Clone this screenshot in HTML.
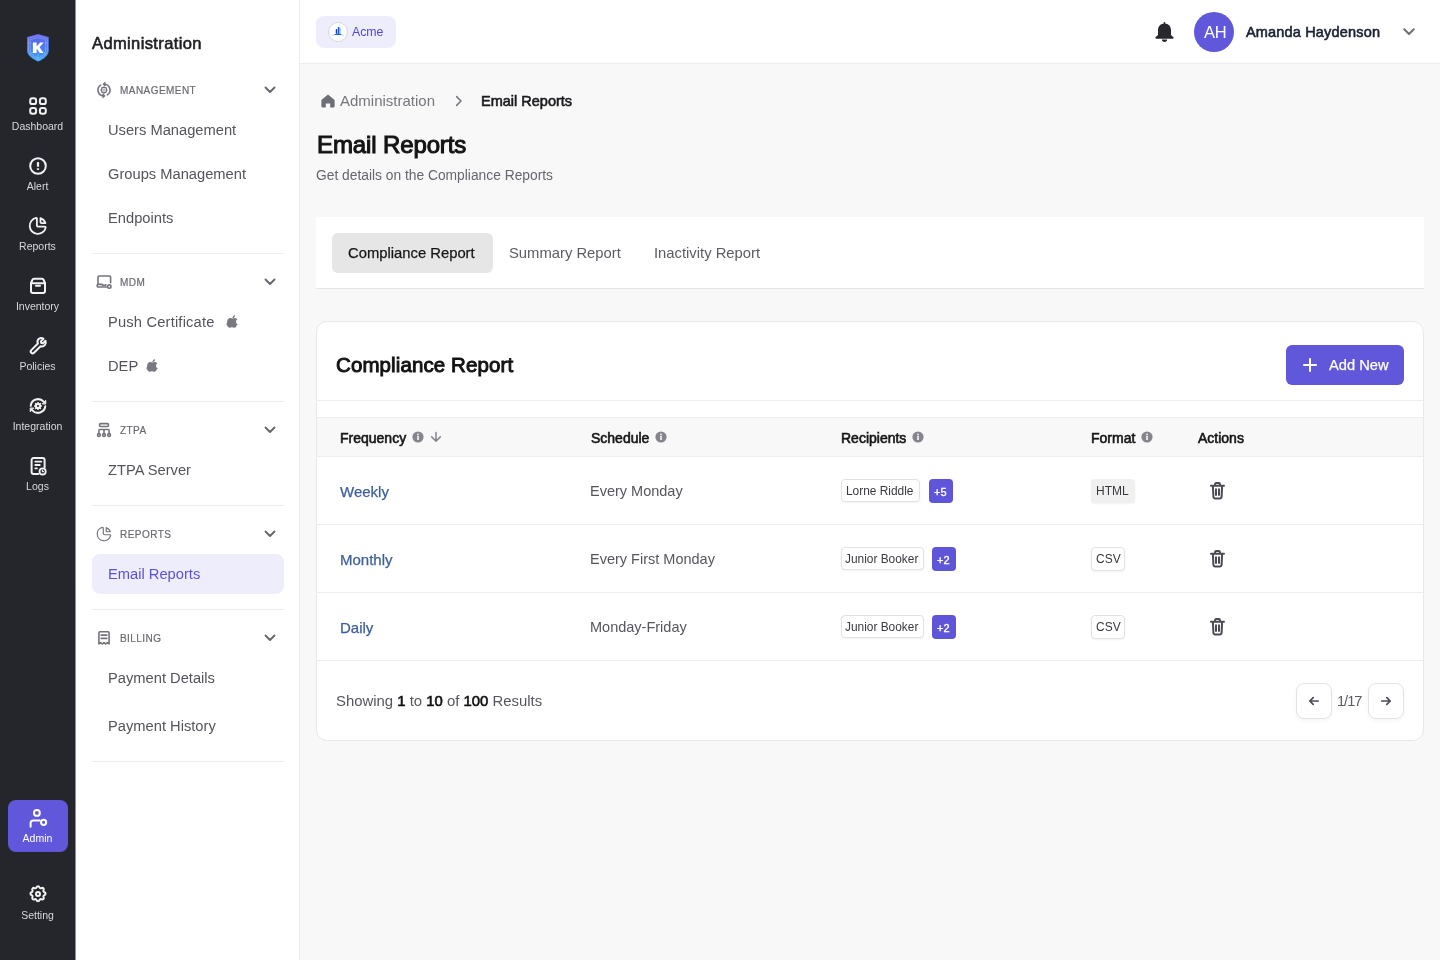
<!DOCTYPE html>
<html lang="en">
<head>
<meta charset="utf-8">
<title>Email Reports</title>
<style>
*{box-sizing:border-box;margin:0;padding:0}
html,body{width:1440px;height:960px;overflow:hidden;background:#f8f8f8;font-family:"Liberation Sans",sans-serif;position:relative}
.a{position:absolute}
.t{will-change:transform;position:absolute;white-space:nowrap;font-size:var(--f);line-height:var(--f);top:calc(var(--b) - 0.8465*var(--f))}
.b{font-weight:700}
.sb{-webkit-text-stroke-width:0.6px}
.md{-webkit-text-stroke-width:0.25px}
svg{position:absolute;overflow:visible}
/* nav */
#nav{left:0;top:0;width:75px;height:960px;background:#25262b}
#navb{left:75px;top:0;width:1px;height:960px;background:#8c8f9a}
.nl{color:#d8d8dc;text-align:center;width:75px;left:0}
.ni{stroke:#f2f2f2;fill:none;stroke-width:2;stroke-linecap:round;stroke-linejoin:round}
/* side */
#side{left:76px;top:0;width:223px;height:960px;background:#fff}
#sideb{left:299px;top:0;width:1px;height:960px;background:#ececec}
.sh{color:#6a6a72;letter-spacing:0.45px;-webkit-text-stroke:0.2px #6a6a72}
.si{color:#54545c}
.dv{left:92px;width:192px;height:1px;background:#ececec}
.sic{stroke:#74747c;fill:none;stroke-width:1.6;stroke-linecap:round;stroke-linejoin:round}
.chev{stroke:#64646c;fill:none;stroke-width:1.8;stroke-linecap:round;stroke-linejoin:round}
/* header */
#hdr{left:300px;top:0;width:1140px;height:63px;background:#fff}
#hdrb{left:300px;top:63px;width:1140px;height:1px;background:#ececec}
/* main */
.th{color:#161618}
.info{fill:#85858d}
.row{left:317px;width:1106px;height:1px;background:#eeeeee}
.tag{position:absolute;height:23px;border:1px solid #e2e2e2;border-radius:4px;background:#fff;box-shadow:0 1px 2px rgba(0,0,0,.05)}
.badge{position:absolute;width:24px;height:24px;border-radius:4px;background:#5f55d8}
.trash{stroke:#4b4b55;fill:none;stroke-width:2;stroke-linecap:round;stroke-linejoin:round}
</style>
</head>
<body>
<!-- ============ DARK NAV ============ -->
<div id="nav" class="a"></div>
<div id="navb" class="a"></div>
<!-- logo -->
<svg style="left:26px;top:33px" width="24" height="30" viewBox="0 0 24 30">
  <defs>
    <linearGradient id="lg" x1="0" y1="0" x2="0" y2="1">
      <stop offset="0" stop-color="#6360e6"/>
      <stop offset=".55" stop-color="#4a7ff0"/>
      <stop offset="1" stop-color="#3daaf6"/>
    </linearGradient>
  </defs>
  <path d="M12.1 1.1L22.8 4.1V17.5C22.8 22.5 17.5 26.3 12.2 28.6 6.9 26.3 1 22.5 1 17.5V4.1z" fill="url(#lg)"/>
  <g stroke="#cfe6ff" stroke-width=".7" fill="none" opacity=".45">
    <path d="M12.1 2.6L21.3 5.2V17.3C21.3 21.6 16.8 24.9 12.2 27 7.6 24.9 2.5 21.6 2.5 17.3V5.2z"/>
    <path d="M12.1 4.6L19.6 6.6V17C19.6 20.6 16 23.4 12.2 25.2 8.4 23.4 4.2 20.6 4.2 17V6.6z"/>
    <path d="M3 22l6-4M21 22l-6-4M2.5 10h3M18.5 10h3M12 21v5"/>
  </g>
  <path d="M6.9 9.4h3.7v4.2l3.6-4.2h3.4l-4 4.9 3.8 5.6h-3.6l-3.2-4.5v4.5H6.9z" fill="#fff"/>
</svg>

<!-- Dashboard -->
<svg class="ni" style="left:26px;top:94px" width="24" height="24" viewBox="0 0 24 24">
  <rect x="4.2" y="4.2" width="5.9" height="5.9" rx="2.2"/><rect x="13.9" y="4.2" width="5.9" height="5.9" rx="2.2"/>
  <rect x="4.2" y="13.9" width="5.9" height="5.9" rx="2.2"/><rect x="13.9" y="13.9" width="5.9" height="5.9" rx="2.2"/>
</svg>
<div class="t nl" style="--b:130px;--f:10.5px">Dashboard</div>
<!-- Alert -->
<svg class="ni" style="left:26px;top:154px" width="24" height="24" viewBox="0 0 24 24">
  <circle cx="12" cy="12" r="7.8"/><path d="M12 8.1v4.6" stroke-linecap="butt" stroke-width="2.2"/><path d="M12 14.3v1.6" stroke-linecap="butt" stroke-width="2.2"/>
</svg>
<div class="t nl" style="--b:190.3px;--f:10.5px">Alert</div>
<!-- Reports -->
<svg class="ni" style="left:27.4px;top:215px" width="21.6" height="21.6" viewBox="0 0 24 24" stroke-width="2.2">
  <path d="M10 3.2a9 9 0 1 0 10.8 10.8a1 1 0 0 0 -1 -1h-6.8a2 2 0 0 1 -2 -2v-7a.9 .9 0 0 0 -1 -.8"/><path d="M15 3.5a9 9 0 0 1 5.5 5.5h-4.5a1 1 0 0 1 -1 -1v-4.5"/>
</svg>
<div class="t nl" style="--b:250.3px;--f:10.5px">Reports</div>
<!-- Inventory -->
<svg class="ni" style="left:26px;top:274px" width="24" height="24" viewBox="0 0 24 24">
  <path d="M5 9V17.1a2 2 0 0 0 2 2h10a2 2 0 0 0 2 -2V9"/><path d="M5 9.2l1.3-3.2a2 2 0 0 1 1.8-1.3h7.8a2 2 0 0 1 1.8 1.3l1.3 3.2z"/><path d="M10 11.8h4"/>
</svg>
<div class="t nl" style="--b:310.3px;--f:10.5px">Inventory</div>
<!-- Policies -->
<svg class="ni" style="left:26px;top:334px" width="24" height="24" viewBox="0 0 24 24">
  <path transform="translate(-1.3 -0.4)" d="M14.2 5.2a4 4 0 0 1 4.6 0l-2.6 2.6 0.4 1.6 1.6 0.4 2.6-2.6a4 4 0 0 1 -4.9 5.4l-6.6 6.6a1.9 1.9 0 0 1 -2.7 -2.7l6.6-6.6a4 4 0 0 1 1 -4.7z"/>
</svg>
<div class="t nl" style="--b:370.3px;--f:10.5px">Policies</div>
<!-- Integration -->
<svg class="ni" style="left:26px;top:394px" width="24" height="24" viewBox="0 0 24 24">
  <path d="M4.7 11.8a7.4 7.4 0 0 1 12.9-4.1"/><path d="M19.3 12.2a7.4 7.4 0 0 1 -12.9 4.1"/>
  <path d="M16.4 9.7L19.8 6.3V9.7z" fill="#f2f2f2" stroke-width="0.9"/><path d="M7.6 14.3L4.2 17.7V14.3z" fill="#f2f2f2" stroke-width="0.9"/>
  <g fill="#f2f2f2" stroke="none">
    <circle cx="12" cy="12" r="3.1"/>
    <rect x="11.25" y="8" width="1.5" height="8" rx=".3"/><rect x="8" y="11.25" width="8" height="1.5" rx=".3"/>
    <rect x="11.25" y="8" width="1.5" height="8" rx=".3" transform="rotate(45 12 12)"/><rect x="11.25" y="8" width="1.5" height="8" rx=".3" transform="rotate(-45 12 12)"/>
  </g>
  <circle cx="12" cy="12" r="1.1" fill="#25262b" stroke="none"/>
</svg>
<div class="t nl" style="--b:430.3px;--f:10.5px">Integration</div>
<!-- Logs -->
<svg class="ni" style="left:26px;top:454px" width="24" height="24" viewBox="0 0 24 24">
  <path d="M12.2 20H7.6a2 2 0 0 1 -2 -2V6a2 2 0 0 1 2 -2h9a2 2 0 0 1 2 2v7.4"/>
  <path d="M9.3 7.7h6M9.3 11h4.5M9.3 14.4h1.6" stroke-width="1.8"/>
  <circle cx="16.6" cy="17.4" r="3.1" stroke-width="1.8"/><path d="M16.4 16v1.6h1.1" stroke-width="1.1"/>
</svg>
<div class="t nl" style="--b:490.3px;--f:10.5px">Logs</div>

<!-- Admin -->
<div class="a" style="left:8px;top:800px;width:60px;height:52px;background:#6157db;border-radius:8px"></div>
<svg class="ni" style="left:25.7px;top:805.6px;stroke:#fff" width="24" height="24" viewBox="0 0 24 24">
  <circle cx="10.9" cy="6.9" r="2.9"/><path d="M4.6 20.8v-3.6a2.6 2.6 0 0 1 2.6-2.6h6.4"/><circle cx="17.6" cy="16.3" r="2.6"/>
</svg>
<div class="t nl" style="--b:842px;--f:10.5px;color:#fff">Admin</div>
<!-- Setting -->
<svg class="ni" style="left:26px;top:882px" width="24" height="24" viewBox="0 0 24 24">
  <path d="M10.6 5.2c.4-1.4 2.4-1.4 2.8 0a1.5 1.5 0 0 0 2.2 .9c1.3-.8 2.7 .7 2 2a1.5 1.5 0 0 0 .9 2.2c1.4 .4 1.4 2.4 0 2.8a1.5 1.5 0 0 0 -.9 2.2c.8 1.3-.7 2.7-2 2a1.5 1.5 0 0 0 -2.2 .9c-.4 1.4-2.4 1.4-2.8 0a1.5 1.5 0 0 0 -2.2-.9c-1.3 .8-2.7-.7-2-2a1.5 1.5 0 0 0 -.9-2.2c-1.4-.4-1.4-2.4 0-2.8a1.5 1.5 0 0 0 .9-2.2c-.8-1.3 .7-2.7 2-2a1.5 1.5 0 0 0 2.2-.9z"/>
  <circle cx="12" cy="12" r="2"/>
</svg>
<div class="t nl" style="--b:918.4px;--f:10.5px">Setting</div>

<!-- ============ SECONDARY SIDEBAR ============ -->
<div id="side" class="a"></div>
<div id="sideb" class="a"></div>
<div class="t sb" style="left:92px;--b:49.2px;--f:16.5px;letter-spacing:0.38px;color:#1e1e23">Administration</div>

<!-- Management -->
<svg class="sic" style="left:94px;top:80px" width="20" height="20" viewBox="0 0 20 20" stroke-width="1.5">
  <path d="M6.7 5.1A5.8 5.8 0 0 0 9.4 15.8"/><path d="M10.6 4.2A5.8 5.8 0 0 1 13.3 14.9"/>
  <path d="M9.2 14.2L11.1 15.8 9.2 17.5z" fill="#74747c" stroke-width="1"/><path d="M10.8 2.5L8.9 4.2 10.8 5.8z" fill="#74747c" stroke-width="1"/>
  <rect x="7.7" y="7.7" width="4.6" height="4.6" rx=".5" stroke-width="1.3"/><rect x="9.3" y="9.3" width="1.4" height="1.4" fill="#74747c" stroke="none"/>
  <path d="M10 6.6v.9M10 12.5v.9M6.6 10h.9M12.5 10h.9" stroke-width="1.1"/>
</svg>
<div class="t sh" style="left:120.3px;--b:94.5px;--f:10px">MANAGEMENT</div>
<svg class="chev" style="left:262px;top:84px" width="16" height="12" viewBox="0 0 16 12"><path d="M3.5 3.5l4.5 4.5 4.5-4.5"/></svg>
<div class="t si" style="left:108px;--b:135.2px;--f:14.7px">Users Management</div>
<div class="t si" style="left:108px;--b:179.3px;--f:14.7px">Groups Management</div>
<div class="t si" style="left:108px;--b:223.3px;--f:14.7px">Endpoints</div>
<div class="a dv" style="top:253px"></div>

<!-- MDM -->
<svg class="sic" style="left:94px;top:272px" width="20" height="20" viewBox="0 0 20 20" stroke-width="1.5">
  <path d="M4 12V5.2A1.2 1.2 0 0 1 5.2 4h10.2A1.2 1.2 0 0 1 16.6 5.2V10.7"/>
  <path d="M12.8 15H4.2A1 1 0 0 1 3.2 14V13.2A.8 .8 0 0 1 4 12.4H8.1l.7 .8h2.6l.5-.5"/>
  <circle cx="15.3" cy="14.6" r="1.7"/>
</svg>
<div class="t sh" style="left:120.3px;--b:286.8px;--f:10px">MDM</div>
<svg class="chev" style="left:262px;top:276px" width="16" height="12" viewBox="0 0 16 12"><path d="M3.5 3.5l4.5 4.5 4.5-4.5"/></svg>
<div class="t si" style="left:108px;--b:327.5px;--f:14.7px;letter-spacing:.18px">Push Certificate</div>
<svg style="left:227.2px;top:314.9px" width="12" height="13" viewBox="0 0 170 200"><path fill="#7a7981" d="M150 147c-3 8-7 15-11 22-6 9-11 15-15 18-6 6-13 8-20 8-5 0-11-1-18-4-7-3-13-4-19-4-6 0-13 1-19 4-7 3-12 4-16 4-8 0-15-3-21-9-4-4-9-10-15-19-6-9-11-20-15-31C-3 124-5 113-5 102c0-12 3-23 8-32 4-7 10-13 17-17 7-4 15-6 23-6 5 0 11 1 19 4 8 3 13 4 15 4 2 0 8-2 17-5 9-3 16-4 22-4 17 1 29 8 38 20-15 9-23 22-22 39 0 13 5 24 14 33 4 4 9 7 14 9-1 3-2 6-4 9zM116 7c0 10-4 20-11 29-9 10-19 16-30 15 0-1 0-3 0-4 0-10 4-20 12-29 4-4 8-8 14-11 6-3 11-4 16-4 0 1 0 3 0 4z"/></svg>
<div class="t si" style="left:108px;--b:371.2px;--f:14.7px">DEP</div>
<svg style="left:146.5px;top:358.9px" width="12" height="13" viewBox="0 0 170 200"><path fill="#7a7981" d="M150 147c-3 8-7 15-11 22-6 9-11 15-15 18-6 6-13 8-20 8-5 0-11-1-18-4-7-3-13-4-19-4-6 0-13 1-19 4-7 3-12 4-16 4-8 0-15-3-21-9-4-4-9-10-15-19-6-9-11-20-15-31C-3 124-5 113-5 102c0-12 3-23 8-32 4-7 10-13 17-17 7-4 15-6 23-6 5 0 11 1 19 4 8 3 13 4 15 4 2 0 8-2 17-5 9-3 16-4 22-4 17 1 29 8 38 20-15 9-23 22-22 39 0 13 5 24 14 33 4 4 9 7 14 9-1 3-2 6-4 9zM116 7c0 10-4 20-11 29-9 10-19 16-30 15 0-1 0-3 0-4 0-10 4-20 12-29 4-4 8-8 14-11 6-3 11-4 16-4 0 1 0 3 0 4z"/></svg>
<div class="a dv" style="top:401px"></div>

<!-- ZTPA -->
<svg class="sic" style="left:94px;top:420px" width="20" height="20" viewBox="0 0 20 20" stroke-width="1.5">
  <rect x="5.5" y="3.6" width="9" height="2.9" rx="1.2"/>
  <path d="M4.9 13.3V10.6A1.1 1.1 0 0 1 6 9.5h8A1.1 1.1 0 0 1 15.1 10.6V13.3M10 9.5v3.8"/>
  <circle cx="4.9" cy="15" r="1.4"/><circle cx="10" cy="15" r="1.4"/><circle cx="15.1" cy="15" r="1.4"/>
</svg>
<div class="t sh" style="left:120.3px;--b:434.6px;--f:10px">ZTPA</div>
<svg class="chev" style="left:262px;top:424px" width="16" height="12" viewBox="0 0 16 12"><path d="M3.5 3.5l4.5 4.5 4.5-4.5"/></svg>
<div class="t si" style="left:108px;--b:475.4px;--f:14.7px">ZTPA Server</div>
<div class="a dv" style="top:505px"></div>

<!-- Reports -->
<svg class="sic" style="left:95px;top:525px" width="18" height="18" viewBox="0 0 24 24" stroke-width="2.2">
  <path d="M10 3.2a9 9 0 1 0 10.8 10.8a1 1 0 0 0 -1 -1h-6.8a2 2 0 0 1 -2 -2v-7a.9 .9 0 0 0 -1 -.8"/><path d="M15 3.5a9 9 0 0 1 5.5 5.5h-4.5a1 1 0 0 1 -1 -1v-4.5"/>
</svg>
<div class="t sh" style="left:120.3px;--b:538.8px;--f:10px">REPORTS</div>
<svg class="chev" style="left:262px;top:528px" width="16" height="12" viewBox="0 0 16 12"><path d="M3.5 3.5l4.5 4.5 4.5-4.5"/></svg>
<div class="a" style="left:92px;top:554px;width:192px;height:40px;border-radius:8px;background:#eeedfb"></div>
<div class="t" style="left:108px;--b:579.5px;--f:14.7px;color:#5b52d6">Email Reports</div>
<div class="a dv" style="top:609px"></div>

<!-- Billing -->
<svg class="sic" style="left:94px;top:628px" width="20" height="20" viewBox="0 0 20 20" stroke-width="1.5">
  <path d="M4.9 15.9V4.9L5.6 3.8H14.4L15.1 4.9V15.9L13.3 14.6 11.6 15.9 10 14.6 8.4 15.9 6.7 14.6z"/>
  <path d="M7.2 7.1h5.6M7.2 10.4h5.6"/>
</svg>
<div class="t sh" style="left:120.3px;--b:642.6px;--f:10px">BILLING</div>
<svg class="chev" style="left:262px;top:632px" width="16" height="12" viewBox="0 0 16 12"><path d="M3.5 3.5l4.5 4.5 4.5-4.5"/></svg>
<div class="t si" style="left:108px;--b:683.8px;--f:14.7px">Payment Details</div>
<div class="t si" style="left:108px;--b:731.3px;--f:14.7px">Payment History</div>
<div class="a dv" style="top:761px"></div>

<!-- ============ HEADER ============ -->
<div id="hdr" class="a"></div>
<div id="hdrb" class="a"></div>
<div class="a" style="left:316px;top:16px;width:80px;height:32px;border-radius:8px;background:#eeedfc"></div>
<div class="a" style="left:328px;top:22px;width:20px;height:20px;border-radius:50%;background:#fff;border:1px solid #d6d6dc"></div>
<svg style="left:332px;top:26px" width="12" height="12" viewBox="0 0 12 12">
  <rect x="3.1" y="4.1" width=".9" height="2.8" fill="#bfe0f8"/>
  <rect x="7.2" y="2" width="1.7" height="5.8" fill="#9fd0f5"/>
  <rect x="5.8" y=".9" width="1.5" height="7.4" rx=".4" fill="#1a56c9"/>
  <rect x="3.9" y="2.9" width="1.3" height="4.9" rx=".6" fill="#1d34ad"/>
  <ellipse cx="5.9" cy="8.4" rx="3.9" ry=".6" fill="#1a66d0"/>
  <path d="M0 9.5q1-.3 2-.7M9.8 8.9q1 .4 2.1.6" stroke="#8cc4f0" stroke-width=".7" fill="none"/>
</svg>
<div class="t" style="left:352px;--b:36px;--f:12.3px;color:#4f46dc">Acme</div>

<svg style="left:1155px;top:21px" width="19" height="22" viewBox="0 0 19 22">
  <rect x="8.6" y="1" width="1.8" height="2.4" rx=".9" fill="#27272d"/>
  <path fill="#27272d" d="M9.5 2.4C13.3 2.4 16 5.2 16 9V14.1L17.9 15.8A1 1 0 0 1 17.3 17.8H1.7A1 1 0 0 1 1.1 15.8L3 14.1V9C3 5.2 5.7 2.4 9.5 2.4z"/>
  <path fill="#27272d" d="M6.9 18.5h5.2a2.6 2.4 0 0 1 -5.2 0z"/>
</svg>
<div class="a" style="left:1194px;top:12px;width:40px;height:40px;border-radius:50%;background:#6157db"></div>
<div class="t" style="left:1203.5px;--b:38.1px;--f:16.5px;color:#fff;letter-spacing:-0.3px">AH</div>
<div class="t sb" style="left:1246px;--b:37px;--f:14.5px;letter-spacing:0.17px;color:#1b2233">Amanda Haydenson</div>
<svg class="chev" style="left:1401px;top:26px" width="16" height="12" viewBox="0 0 16 12"><path d="M3.2 3.2l4.8 4.8 4.8-4.8" stroke="#6e6e76" stroke-width="2"/></svg>

<!-- ============ MAIN ============ -->
<svg style="left:320px;top:94px" width="16" height="14" viewBox="0 0 16 14">
  <path fill="#6e6e76" d="M8 .6l6.6 5.4v6.6a1 1 0 0 1 -1 1H10.2V9.6H5.8v4H2.4a1 1 0 0 1 -1 -1V6z"/>
</svg>
<div class="t" style="left:340px;--b:105.8px;--f:15px;color:#76767e">Administration</div>
<svg class="chev" style="left:452px;top:93px" width="14" height="16" viewBox="0 0 14 16"><path d="M4.6 3.6l4.4 4.4-4.4 4.4" stroke="#76767e" stroke-width="1.5"/></svg>
<div class="t sb" style="left:481px;--b:106px;--f:14.5px;color:#1b1b1f">Email Reports</div>

<div class="t sb" style="left:316.5px;--b:153px;--f:24px;letter-spacing:-0.12px;color:#141416;-webkit-text-stroke-width:1.05px">Email Reports</div>
<div class="t" style="left:316px;--b:180.7px;--f:13.8px;color:#66666e">Get details on the Compliance Reports</div>

<!-- tabs -->
<div class="a" style="left:316px;top:217px;width:1108px;height:72px;background:#fff;border-bottom:1px solid #e4e4e4"></div>
<div class="a" style="left:332px;top:233px;width:161px;height:40px;border-radius:6px;background:#e6e6e6"></div>
<div class="t md" style="left:348px;--b:258.2px;--f:14.8px;color:#151517">Compliance Report</div>
<div class="t" style="left:509px;--b:258.2px;--f:14.8px;color:#5c5c64">Summary Report</div>
<div class="t" style="left:653.5px;--b:258.2px;--f:14.8px;color:#5c5c64">Inactivity Report</div>

<!-- card -->
<div class="a" style="left:316px;top:321px;width:1108px;height:420px;background:#fff;border:1px solid #e9e9e9;border-radius:11px"></div>
<div class="t sb" style="left:336px;--b:372px;--f:20.5px;letter-spacing:0.1px;color:#121214;-webkit-text-stroke-width:0.95px">Compliance Report</div>
<div class="a" style="left:1286px;top:345px;width:118px;height:40px;border-radius:6px;background:#6157db"></div>
<svg style="left:1302px;top:357px" width="16" height="16" viewBox="0 0 16 16"><path d="M8 1.2v13.6M1.2 8h13.6" stroke="#fff" stroke-width="2" stroke-linecap="butt"/></svg>
<div class="t md" style="left:1328.5px;--b:370.2px;--f:14.7px;color:#fff">Add New</div>
<div class="a row" style="top:400px"></div>

<!-- table header -->
<div class="a" style="left:317px;top:417px;width:1106px;height:40px;background:#f8f8f8;border-top:1px solid #eeeeee;border-bottom:1px solid #eeeeee"></div>
<div class="t sb th" style="left:340px;--b:442.4px;--f:14px">Frequency</div>
<svg class="info" style="left:412px;top:431px" width="12" height="12" viewBox="0 0 12 12"><circle cx="6" cy="6" r="5.6"/><rect x="5.2" y="5" width="1.6" height="4" fill="#f8f8f8"/><circle cx="6" cy="3.5" r=".9" fill="#f8f8f8"/></svg>
<svg style="left:429px;top:430px" width="14" height="14" viewBox="0 0 14 14"><path d="M7 2.6v8.4M2.7 6.9L7 11.2l4.3-4.3" stroke="#85858d" stroke-width="1.5" fill="none" stroke-linecap="round" stroke-linejoin="round"/></svg>
<div class="t sb th" style="left:590.5px;--b:442.4px;--f:14px">Schedule</div>
<svg class="info" style="left:654.5px;top:431px" width="12" height="12" viewBox="0 0 12 12"><circle cx="6" cy="6" r="5.6"/><rect x="5.2" y="5" width="1.6" height="4" fill="#f8f8f8"/><circle cx="6" cy="3.5" r=".9" fill="#f8f8f8"/></svg>
<div class="t sb th" style="left:840.5px;--b:442.4px;--f:14px">Recipients</div>
<svg class="info" style="left:911.5px;top:431px" width="12" height="12" viewBox="0 0 12 12"><circle cx="6" cy="6" r="5.6"/><rect x="5.2" y="5" width="1.6" height="4" fill="#f8f8f8"/><circle cx="6" cy="3.5" r=".9" fill="#f8f8f8"/></svg>
<div class="t sb th" style="left:1091px;--b:442.4px;--f:14px">Format</div>
<svg class="info" style="left:1140.5px;top:431px" width="12" height="12" viewBox="0 0 12 12"><circle cx="6" cy="6" r="5.6"/><rect x="5.2" y="5" width="1.6" height="4" fill="#f8f8f8"/><circle cx="6" cy="3.5" r=".9" fill="#f8f8f8"/></svg>
<div class="t sb th" style="left:1198px;--b:442.4px;--f:14px">Actions</div>

<!-- rows -->
<div class="t" style="left:340px;--b:496.5px;--f:14.8px;color:#3c5f99;-webkit-text-stroke-width:.25px;font-size:15px;line-height:15px;top:calc(var(--b) - 12.7px)">Weekly</div>
<div class="t" style="left:589.8px;--b:496.2px;--f:14.5px;color:#56565e">Every Monday</div>
<div class="tag" style="left:841px;top:479px;width:79px"></div>
<div class="t" style="left:845.5px;--b:496px;--f:11.9px;color:#3a3a40">Lorne Riddle</div>
<div class="badge" style="left:929px;top:479px"></div>
<div class="t sb" style="left:934px;--b:496px;--f:11px;-webkit-text-stroke-width:.35px;color:#fff">+5</div>
<div class="a" style="left:1091px;top:479px;width:44px;height:24px;border-radius:4px;background:#f0f0f0;box-shadow:0 1px 2px rgba(0,0,0,.05)"></div>
<div class="t" style="left:1096px;--b:495px;--f:12px;color:#38383e">HTML</div>
<svg class="trash" style="left:1209px;top:481px" width="17" height="19" viewBox="0 0 17 19"><path d="M2 4.8h13M6.1 4.8V3a1 1 0 0 1 1-1h2.8a1 1 0 0 1 1 1v1.8M3.9 4.8l.5 11.1a1.6 1.6 0 0 0 1.6 1.5h5a1.6 1.6 0 0 0 1.6-1.5l.5-11.1M7 8.2v5.8M10 8.2v5.8"/></svg>
<div class="a row" style="top:524px"></div>

<div class="t" style="left:340px;--b:564.5px;--f:14.8px;color:#3c5f99;-webkit-text-stroke-width:.25px;font-size:15px;line-height:15px;top:calc(var(--b) - 12.7px)">Monthly</div>
<div class="t" style="left:589.8px;--b:564.2px;--f:14.5px;color:#56565e">Every First Monday</div>
<div class="tag" style="left:841px;top:547px;width:83px"></div>
<div class="t" style="left:845px;--b:564px;--f:11.9px;color:#3a3a40">Junior Booker</div>
<div class="badge" style="left:932px;top:547px"></div>
<div class="t sb" style="left:937px;--b:564px;--f:11px;-webkit-text-stroke-width:.35px;color:#fff">+2</div>
<div class="tag" style="left:1091px;top:547px;width:34px;height:24px"></div>
<div class="t" style="left:1096px;--b:563px;--f:12px;color:#38383e">CSV</div>
<svg class="trash" style="left:1209px;top:549px" width="17" height="19" viewBox="0 0 17 19"><path d="M2 4.8h13M6.1 4.8V3a1 1 0 0 1 1-1h2.8a1 1 0 0 1 1 1v1.8M3.9 4.8l.5 11.1a1.6 1.6 0 0 0 1.6 1.5h5a1.6 1.6 0 0 0 1.6-1.5l.5-11.1M7 8.2v5.8M10 8.2v5.8"/></svg>
<div class="a row" style="top:592px"></div>

<div class="t" style="left:340px;--b:632.5px;--f:14.8px;color:#3c5f99;-webkit-text-stroke-width:.25px;font-size:15px;line-height:15px;top:calc(var(--b) - 12.7px)">Daily</div>
<div class="t" style="left:589.8px;--b:632.2px;--f:14.5px;color:#56565e">Monday-Friday</div>
<div class="tag" style="left:841px;top:615px;width:83px"></div>
<div class="t" style="left:845px;--b:632px;--f:11.9px;color:#3a3a40">Junior Booker</div>
<div class="badge" style="left:932px;top:615px"></div>
<div class="t sb" style="left:937px;--b:632px;--f:11px;-webkit-text-stroke-width:.35px;color:#fff">+2</div>
<div class="tag" style="left:1091px;top:615px;width:34px;height:24px"></div>
<div class="t" style="left:1096px;--b:631px;--f:12px;color:#38383e">CSV</div>
<svg class="trash" style="left:1209px;top:617px" width="17" height="19" viewBox="0 0 17 19"><path d="M2 4.8h13M6.1 4.8V3a1 1 0 0 1 1-1h2.8a1 1 0 0 1 1 1v1.8M3.9 4.8l.5 11.1a1.6 1.6 0 0 0 1.6 1.5h5a1.6 1.6 0 0 0 1.6-1.5l.5-11.1M7 8.2v5.8M10 8.2v5.8"/></svg>
<div class="a row" style="top:660px"></div>

<!-- footer -->
<div class="t" style="left:336px;--b:706.3px;--f:14.9px;color:#56565e">Showing <span class="sb" style="color:#111">1</span> to <span class="sb" style="color:#111">10</span> of <span class="sb" style="color:#111">100</span> Results</div>
<div class="a" style="left:1296px;top:683px;width:36px;height:36px;border-radius:8px;background:#fff;border:1px solid #e3e3e3;box-shadow:0 2px 4px rgba(0,0,0,.04)"></div>
<svg style="left:1306px;top:693px" width="16" height="16" viewBox="0 0 16 16"><path d="M12.2 8H3.8M7.2 4.6L3.8 8l3.4 3.4" stroke="#4b4b55" stroke-width="1.7" fill="none" stroke-linecap="round" stroke-linejoin="round"/></svg>
<div class="t" style="left:1336.5px;--b:706.1px;--f:14.6px;letter-spacing:-1px;color:#5a5a62">1/17</div>
<div class="a" style="left:1368px;top:683px;width:36px;height:36px;border-radius:8px;background:#fff;border:1px solid #e3e3e3;box-shadow:0 2px 4px rgba(0,0,0,.04)"></div>
<svg style="left:1378px;top:693px" width="16" height="16" viewBox="0 0 16 16"><path d="M3.8 8h8.4M8.8 4.6L12.2 8l-3.4 3.4" stroke="#4b4b55" stroke-width="1.7" fill="none" stroke-linecap="round" stroke-linejoin="round"/></svg>
</body>
</html>
